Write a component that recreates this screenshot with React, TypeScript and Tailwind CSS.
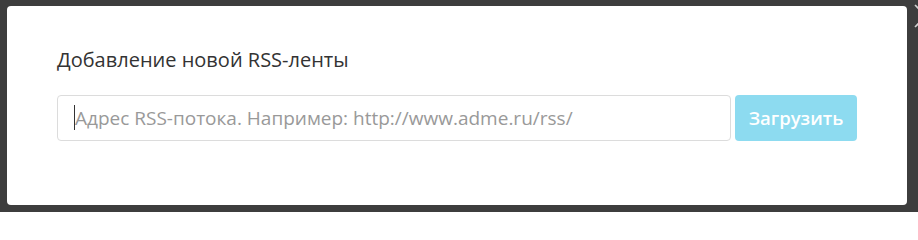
export default function App() {
  return (
    <div className="relative h-[212px] w-[918px] overflow-hidden bg-[#3d3d3d] pl-[7px] pt-[6px] font-['Open_Sans',sans-serif]">
      <div className="h-[199px] w-[900px] rounded-[4px] bg-white px-[50px] pt-[40px]">
        <h2 className="mb-[21px] text-[20px] leading-[28px] font-normal text-[#333]">
          Добавление новой RSS-ленты
        </h2>
        <div className="flex gap-[4px]">
          <div className="relative flex-1">
            <input
              type="text"
              placeholder="Адрес RSS-потока. Например: http://www.adme.ru/rss/"
              className="h-[46px] w-full rounded-[4px] border border-[#dcdcdc] bg-white px-[17px] text-[19px] text-[#333] outline-none placeholder:text-[#999]"
            />
            <span className="absolute left-[17px] top-[10px] h-[25px] w-px bg-[#333]" />
          </div>
          <button className="h-[46px] w-[122px] rounded-[4px] bg-[#8ddbf0] text-[18.5px] font-semibold text-white">
            Загрузить
          </button>
        </div>
      </div>
      <svg className="absolute left-[913px] top-[3px]" width="26" height="26" viewBox="0 0 26 26">
        <path d="M2 2L24 24M24 2L2 24" stroke="#d0d0d0" strokeWidth="1.6" fill="none" />
      </svg>
    </div>
  );
}
